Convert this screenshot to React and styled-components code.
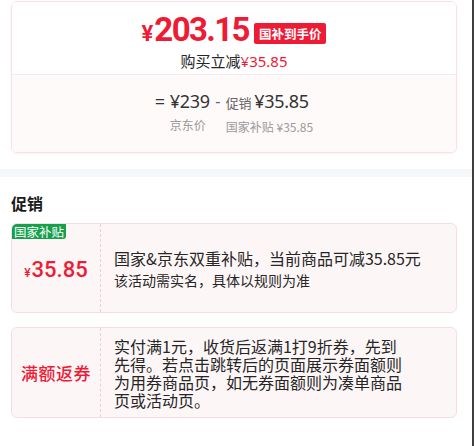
import React from 'react';
import styled, { createGlobalStyle } from 'styled-components';

const GlobalStyle = createGlobalStyle`
  html, body {
    margin: 0;
    padding: 0;
    background: #fff;
  }
  body {
    font-family: 'Noto Sans CJK SC', 'Noto Sans', sans-serif;
    color: #333;
  }
`;

const RED = '#ee1b35';

const Page = styled.div`
  width: 474px;
  height: 446px;
  box-sizing: border-box;
  border-right: 2px solid #3f3f3f;
  background: #fff;
  overflow: hidden;
`;

const TopSection = styled.div`
  padding: 1px 15px 16px 11px;
`;

const PriceCard = styled.div`
  border: 1px solid #f4e3e6;
  border-radius: 6px;
  overflow: hidden;
  box-shadow: 0 1px 2px rgba(230, 200, 205, 0.25);
`;

const FinalPrice = styled.div`
  display: flex;
  flex-direction: column;
  align-items: center;
  padding: 10px 0 4px;
  background: #fff;
`;

const PriceLine = styled.div`
  display: flex;
  align-items: center;
  height: 40px;
  gap: 5px;
`;

const BigPrice = styled.span`
  font-family: Roboto, 'Liberation Sans', sans-serif;
  font-weight: 700;
  color: ${RED};
  font-size: 33px;
  letter-spacing: -1.6px;
  line-height: 40px;
`;

const Yen = styled.span`
  font-size: ${p => p.size || 22}px;
  letter-spacing: 0;
  margin-right: ${p => p.gap || 1}px;
`;

const HandTag = styled.span`
  background: ${RED};
  color: #fff;
  font-size: 12.5px;
  font-weight: 700;
  line-height: 21px;
  padding: 0 5px;
  border-radius: 2px;
  margin-top: 2px;
`;

const SaveLine = styled.div`
  font-size: 15px;
  line-height: 18px;
  color: #262626;
`;

const Red = styled.span`
  color: ${RED};
  font-family: 'Noto Sans', sans-serif;
`;

const Breakdown = styled.div`
  display: flex;
  justify-content: center;
  align-items: flex-start;
  gap: 5px;
  padding: 15px 0 16px;
  border-top: 1px solid #f8eaec;
  background: #fffafa;
`;

const Operator = styled.span`
  font-family: 'Noto Sans', sans-serif;
  font-size: ${p => p.size || 18}px;
  color: ${p => p.color || '#333'};
  line-height: 22px;
  width: ${p => p.w || 10}px;
  text-align: center;
`;

const Col = styled.div`
  display: flex;
  flex-direction: column;
  gap: 4px;
`;

const Amount = styled.div`
  display: flex;
  align-items: baseline;
  gap: 3px;
  line-height: 22px;
  font-family: 'Noto Sans', sans-serif;
  font-size: 18px;
  letter-spacing: -0.3px;
  color: #333;
`;

const SmallLabel = styled.span`
  font-family: 'Noto Sans CJK SC', sans-serif;
  font-size: 13px;
  color: #666;
`;

const Caption = styled.div`
  font-size: 12px;
  line-height: 18px;
  color: #999;
  white-space: nowrap;
`;

const Band = styled.div`
  height: 8px;
  background: #f6f7f9;
`;

const PromoSection = styled.div`
  padding: 15px 15px 0 11px;
  display: flex;
  flex-direction: column;
`;

const Title = styled.div`
  font-size: 16px;
  font-weight: 700;
  line-height: 22px;
  color: #1a1a1a;
  margin-bottom: 9px;
`;

const Cards = styled.div`
  display: flex;
  flex-direction: column;
  gap: 14px;
`;

const PromoCard = styled.div`
  position: relative;
  display: flex;
  min-height: 88px;
  border: 1px solid #f3dfe2;
  border-radius: 6px;
  background: #fdf6f7;
  overflow: hidden;
`;

const Badge = styled.span`
  position: absolute;
  left: 0;
  top: 0;
  background: #16a04a;
  color: #fff;
  font-size: 12.5px;
  line-height: 15px;
  padding: 0 2px;
  border-bottom-right-radius: 3px;
`;

const LeftPanel = styled.div`
  flex: 0 0 88px;
  display: flex;
  align-items: center;
  justify-content: center;
  border-right: 1px dashed #e6d3d7;
  color: ${RED};
`;

const PromoPrice = styled.span`
  font-family: Roboto, 'Noto Sans', sans-serif;
  font-weight: 500;
  font-size: 22px;
  margin-top: 2px;
`;

const PromoName = styled.span`
  font-size: 17px;
  font-weight: 500;
  letter-spacing: 0.5px;
`;

const Desc = styled.div`
  flex: 1;
  display: flex;
  flex-direction: column;
  justify-content: center;
  padding: ${p => p.pad || '0'} 0 ${p => p.padB || '0'} 13px;
  color: #262626;
`;

const DescMain = styled.div`
  font-size: 16px;
  line-height: 23px;
`;

const DescSub = styled.div`
  font-size: 14px;
  line-height: 20px;
`;

const DescBody = styled.div`
  font-size: 16px;
  line-height: 18px;
  max-width: 292px;
`;

export default function App() {
  return (
    <>
      <GlobalStyle />
      <Page>
        <TopSection>
          <PriceCard>
            <FinalPrice>
              <PriceLine>
                <BigPrice><Yen>¥</Yen>203.15</BigPrice>
                <HandTag>国补到手价</HandTag>
              </PriceLine>
              <SaveLine>购买立减<Red>¥35.85</Red></SaveLine>
            </FinalPrice>
            <Breakdown>
              <Operator>=</Operator>
              <Col>
                <Amount>¥239</Amount>
                <Caption>京东价</Caption>
              </Col>
              <Operator size={16} color="#666" w={6}>-</Operator>
              <Col>
                <Amount><SmallLabel>促销</SmallLabel>¥35.85</Amount>
                <Caption>国家补贴 ¥35.85</Caption>
              </Col>
            </Breakdown>
          </PriceCard>
        </TopSection>
        <Band />
        <PromoSection>
          <Title>促销</Title>
          <Cards>
            <PromoCard>
              <Badge>国家补贴</Badge>
              <LeftPanel>
                <PromoPrice><Yen size={12} gap={0}>¥</Yen>35.85</PromoPrice>
              </LeftPanel>
              <Desc>
                <DescMain>国家&amp;京东双重补贴，当前商品可减35.85元</DescMain>
                <DescSub>该活动需实名，具体以规则为准</DescSub>
              </Desc>
            </PromoCard>
            <PromoCard>
              <LeftPanel>
                <PromoName>满额返券</PromoName>
              </LeftPanel>
              <Desc pad="9px" padB="8px">
                <DescBody>
                  实付满1元，收货后返满1打9折券，先到先得。若点击跳转后的页面展示券面额则为用券商品页，如无券面额则为凑单商品页或活动页。
                </DescBody>
              </Desc>
            </PromoCard>
          </Cards>
        </PromoSection>
      </Page>
    </>
  );
}
